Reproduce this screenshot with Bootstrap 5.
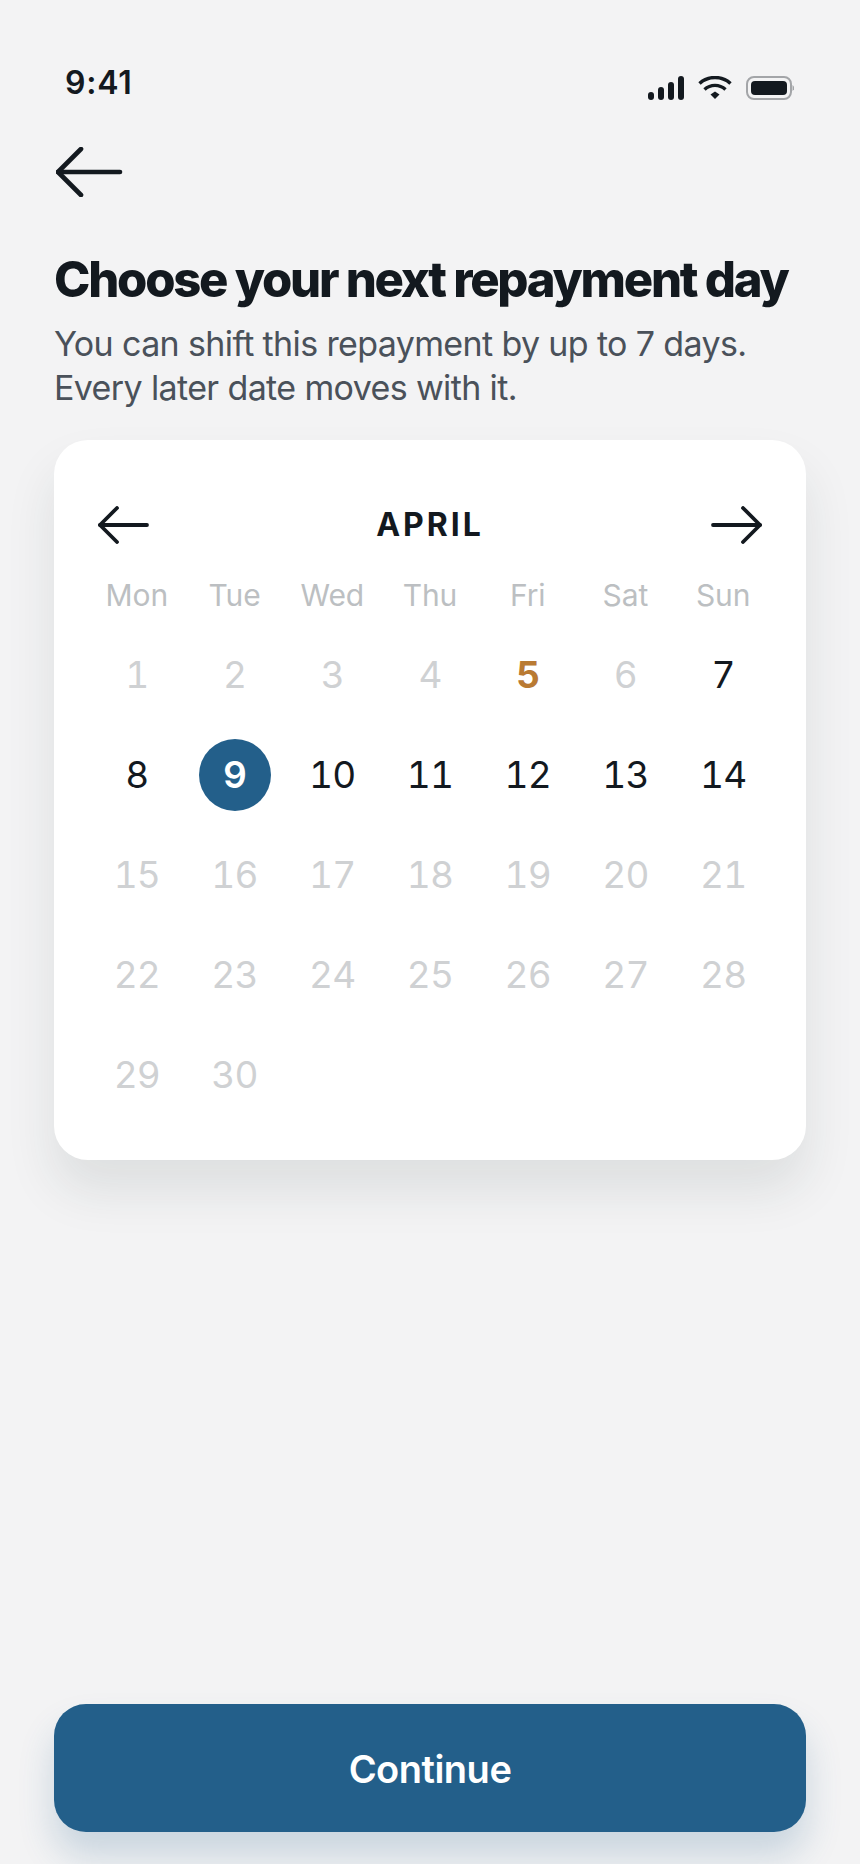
<!DOCTYPE html>
<html lang="en">
<head>
<meta charset="utf-8">
<title>Choose your next repayment day</title>
<link rel="stylesheet" href="https://cdn.jsdelivr.net/npm/bootstrap@5.3.0/dist/css/bootstrap.min.css">
<style>
html,body{height:100%}
body{background:#f3f3f4;font-family:Inter,"Liberation Sans",sans-serif;color:#13191f}
.screen{height:1864px;padding:0 54px 32px;overflow:hidden}
.status-row{padding:63px 12px 0 11px;height:102px}
.clock{font-size:32px;font-weight:600;line-height:40px;letter-spacing:.8px}
.status-icons{gap:14px;padding-top:13px}
.back-row{height:38px;margin-top:45px;padding-left:2px}
.page-title{font-size:49px;font-weight:800;letter-spacing:-2.25px;line-height:56px;margin:67px 0 0;white-space:nowrap}
.page-sub{font-size:34px;line-height:44px;color:#4a515a;margin:14px 0 0;letter-spacing:-.63px}
.cal-card{height:720px;border:0;border-radius:34px;margin-top:30px;background:#fff;padding:0 34px;
 box-shadow:0 30px 50px rgba(30,50,50,.1)}
.cal-head{height:40px;margin-top:65px;padding:0 10px}
.cal-month{font-size:32px;font-weight:700;letter-spacing:3px;line-height:40px}
.cal-grid{display:grid;grid-template-columns:repeat(7,1fr);justify-items:center;align-items:center}
.dow-row{margin-top:30px;height:40px;color:#bcbfc2;font-size:30px;line-height:40px;letter-spacing:-.1px}
.day-rows{margin-top:10px;grid-auto-rows:100px;font-size:37px;letter-spacing:-.8px;font-variant-numeric:tabular-nums}
.day-cell{width:72px;height:72px;border-radius:50%;display:flex;align-items:center;justify-content:center}
.day-off{color:#cfd1d3}
.day-on{color:#13191f}
.day-flag{color:#b97a33;font-weight:700}
.day-sel{background:#235f8a;color:#fff;font-weight:600}
.go-btn{height:128px;border:0;border-radius:32px;background:#235f8a;color:#fff;font-size:38px;font-weight:600;letter-spacing:-.5px;padding-top:8px;
 box-shadow:0 24px 36px rgba(35,95,138,.2)}
.go-btn:hover,.go-btn:active{background:#235f8a!important;color:#fff!important}
</style>
</head>
<body>
<main class="screen d-flex flex-column">
  <div class="status-row d-flex justify-content-between align-items-start">
    <span class="clock">9:41</span>
    <div class="status-icons d-flex align-items-center">
      <svg width="36" height="24" viewBox="0 0 36 24" fill="#13191f"><rect x="0" y="16" width="6" height="8" rx="3"/><rect x="10" y="11" width="6" height="13" rx="3"/><rect x="20" y="6" width="6" height="18" rx="3"/><rect x="30" y="0" width="6" height="24" rx="3"/></svg>
      <svg width="34" height="24" viewBox="0 0 34 24" fill="none" stroke="#13191f" stroke-width="3.4"><path d="M1.5 7.5C10 -.5 24-.5 32.5 7.5"/><path d="M6.5 13.5C12.5 8 21.5 8 27.5 13.5"/><path d="M12.5 18.5L17 15.5L21.5 18.5L17 23Z" fill="#13191f" stroke="none"/></svg>
      <svg width="48" height="24" viewBox="0 0 48 24"><rect x="1" y="1" width="44" height="22" rx="7" fill="none" stroke="#a3a5a8" stroke-width="2"/><rect x="5" y="5" width="36" height="14" rx="4" fill="#13191f"/><path d="M46.5 9l1.5 1.5v3L46.5 15z" fill="#a3a5a8"/></svg>
    </div>
  </div>

  <div class="back-row">
    <svg width="68" height="50" viewBox="0 0 68 50" fill="none" stroke="#13191f" stroke-width="4.6" stroke-linecap="round" stroke-linejoin="round"><path d="M2 25H64"/><path d="M25 2L2 25L25 48"/></svg>
  </div>

  <h1 class="page-title">Choose your next repayment day</h1>
  <p class="page-sub">You can shift this repayment by up to 7 days.<br>Every later date moves with it.</p>

  <section class="card cal-card">
    <div class="cal-head d-flex justify-content-between align-items-center">
      <svg width="52" height="38" viewBox="0 0 52 38" fill="none" stroke="#13191f" stroke-width="3.8" stroke-linecap="round" stroke-linejoin="round"><path d="M2 19H49"/><path d="M19 2L2 19L19 36"/></svg>
      <span class="cal-month">APRIL</span>
      <svg width="52" height="38" viewBox="0 0 52 38" fill="none" stroke="#13191f" stroke-width="3.8" stroke-linecap="round" stroke-linejoin="round"><path d="M50 19H3"/><path d="M33 2L50 19L33 36"/></svg>
    </div>
    <div class="cal-grid dow-row"><span>Mon</span><span>Tue</span><span>Wed</span><span>Thu</span><span>Fri</span><span>Sat</span><span>Sun</span></div>
    <div class="cal-grid day-rows">
      <span class="day-cell day-off">1</span><span class="day-cell day-off">2</span><span class="day-cell day-off">3</span><span class="day-cell day-off">4</span><span class="day-cell day-flag">5</span><span class="day-cell day-off">6</span><span class="day-cell day-on">7</span>
      <span class="day-cell day-on">8</span><span class="day-cell day-sel">9</span><span class="day-cell day-on">10</span><span class="day-cell day-on">11</span><span class="day-cell day-on">12</span><span class="day-cell day-on">13</span><span class="day-cell day-on">14</span>
      <span class="day-cell day-off">15</span><span class="day-cell day-off">16</span><span class="day-cell day-off">17</span><span class="day-cell day-off">18</span><span class="day-cell day-off">19</span><span class="day-cell day-off">20</span><span class="day-cell day-off">21</span>
      <span class="day-cell day-off">22</span><span class="day-cell day-off">23</span><span class="day-cell day-off">24</span><span class="day-cell day-off">25</span><span class="day-cell day-off">26</span><span class="day-cell day-off">27</span><span class="day-cell day-off">28</span>
      <span class="day-cell day-off">29</span><span class="day-cell day-off">30</span>
    </div>
  </section>

  <button type="button" class="btn go-btn w-100 mt-auto">Continue</button>
</main>
<script src="https://cdn.jsdelivr.net/npm/bootstrap@5.3.0/dist/js/bootstrap.bundle.min.js"></script>
</body>
</html>
